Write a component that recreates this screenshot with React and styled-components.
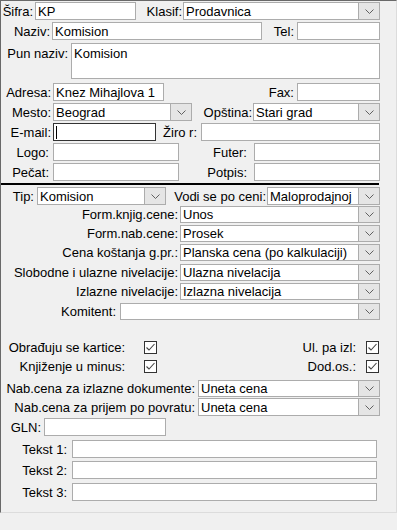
import React from 'react';
import styled, { createGlobalStyle } from 'styled-components';

const GlobalStyle = createGlobalStyle`
  body {
    margin: 0;
    background: #f0f0f0;
    font-family: "Liberation Sans", Arial, sans-serif;
    font-size: 13px;
    color: #000;
  }
`;

const Panel = styled.div`
  width: 397px;
  height: 513px;
  box-sizing: border-box;
  border-top: 1px solid #696969;
  border-left: 1px solid #696969;
  border-right: 1px solid #dcdcdc;
  border-bottom: 1px solid #dcdcdc;
  display: flex;
  flex-direction: column;
`;

const Row = styled.div`
  display: flex;
  align-items: ${(p) => (p.$top ? 'flex-start' : 'center')};
  height: ${(p) => p.$h || 18}px;
  margin-top: ${(p) => p.$mt || 0}px;
  flex: none;
`;

const Label = styled.div`
  width: ${(p) => p.$w}px;
  flex: none;
  box-sizing: border-box;
  text-align: right;
  padding-right: ${(p) => (p.$pr === undefined ? 2 : p.$pr)}px;
  padding-top: ${(p) => p.$pt || 0}px;
  white-space: nowrap;
  line-height: 15px;
`;

const Box = styled.div`
  width: ${(p) => p.$w}px;
  height: 100%;
  flex: none;
  box-sizing: border-box;
  background: #fff;
  border: 1px solid ${(p) => (p.$focus ? '#333' : '#acacac')};
  display: flex;
  align-items: ${(p) => (p.$multi ? 'flex-start' : 'center')};
  padding: ${(p) => (p.$multi ? '2px 0 0 2px' : '0 0 0 2px')};
  white-space: nowrap;
  overflow: hidden;
  line-height: 15px;
`;

const Caret = styled.span`
  width: 1px;
  height: 13px;
  background: #000;
`;

const ComboBox = styled(Box)`
  padding-left: 0;
  align-items: stretch;
`;

const ComboText = styled.div`
  flex: 1;
  display: flex;
  align-items: center;
  padding-left: 2px;
  overflow: hidden;
`;

const ArrowButton = styled.div`
  width: 20px;
  flex: none;
  background: #e5e5e5;
  border-left: 1px solid #acacac;
  display: flex;
  align-items: center;
  justify-content: center;
`;

const CheckBox = styled.div`
  width: 13px;
  height: 13px;
  flex: none;
  box-sizing: border-box;
  border: 1px solid #333;
  background: #fff;
  display: flex;
  align-items: center;
  justify-content: center;
`;

const Separator = styled.div`
  width: 378px;
  height: 2px;
  margin-top: 2px;
  background: #000;
  flex: none;
`;

const TextBox = ({ w, children, focus }) => (
  <Box $w={w} $focus={focus}>
    {focus && <Caret />}
    {children}
  </Box>
);

const Combo = ({ w, children }) => (
  <ComboBox $w={w}>
    <ComboText>{children}</ComboText>
    <ArrowButton>
      <svg width="9" height="5" viewBox="0 0 9 5">
        <polyline points="0.5,0.5 4.5,4.5 8.5,0.5" fill="none" stroke="#606060" strokeWidth="1" />
      </svg>
    </ArrowButton>
  </ComboBox>
);

const Check = () => (
  <CheckBox>
    <svg width="11" height="11" viewBox="0 0 11 11">
      <polyline points="1.5,5.5 4,8 9.5,2" fill="none" stroke="#444" strokeWidth="1.1" />
    </svg>
  </CheckBox>
);

const priceRows = [
  ['Form.knjig.cene:', 'Unos', 1],
  ['Form.nab.cene:', 'Prosek', 2],
  ['Cena koštanja g.pr.:', 'Planska cena (po kalkulaciji)', 2],
  ['Slobodne i ulazne nivelacije:', 'Ulazna nivelacija', 3],
  ['Izlazne nivelacije:', 'Izlazna nivelacija', 2],
];

const App = () => (
  <>
    <GlobalStyle />
    <Panel>
      <Row $mt={1}>
        <Label $w={34}>Šifra:</Label>
        <TextBox w={101}>KP</TextBox>
        <Label $w={47} $pr={1}>Klasif:</Label>
        <Combo w={197}>Prodavnica</Combo>
      </Row>
      <Row $mt={2}>
        <Label $w={51}>Naziv:</Label>
        <TextBox w={210}>Komision</TextBox>
        <Label $w={35} $pr={3}>Tel:</Label>
        <TextBox w={83} />
      </Row>
      <Row $mt={3} $h={36} $top>
        <Label $w={70} $pt={3} $pr={3}>Pun naziv:</Label>
        <Box $w={309} $multi>Komision</Box>
      </Row>
      <Row $mt={4}>
        <Label $w={52}>Adresa:</Label>
        <TextBox w={111}>Knez Mihajlova 1</TextBox>
        <Label $w={133} $pr={3}>Fax:</Label>
        <TextBox w={83} />
      </Row>
      <Row $mt={2}>
        <Label $w={52}>Mesto:</Label>
        <Combo w={139}>Beograd</Combo>
        <Label $w={61} $pr={1}>Opština:</Label>
        <Combo w={127}>Stari grad</Combo>
      </Row>
      <Row $mt={2}>
        <Label $w={52}>E-mail:</Label>
        <TextBox w={103} focus />
        <Label $w={45} $pr={4}>Žiro r:</Label>
        <TextBox w={179} />
      </Row>
      <Row $mt={2}>
        <Label $w={52} $pr={4}>Logo:</Label>
        <TextBox w={126} />
        <Label $w={75} $pr={7}>Futer:</Label>
        <TextBox w={126} />
      </Row>
      <Row $mt={2}>
        <Label $w={52} $pr={4}>Pečat:</Label>
        <TextBox w={126} />
        <Label $w={75} $pr={7}>Potpis:</Label>
        <TextBox w={126} />
      </Row>
      <Separator />
      <Row $mt={2}>
        <Label $w={36} $pr={3}>Tip:</Label>
        <Combo w={129}>Komision</Combo>
        <Label $w={101} $pr={1}>Vodi se po ceni:</Label>
        <Combo w={113}>Maloprodajnoj</Combo>
      </Row>
      {priceRows.map(([label, value, mt]) => (
        <Row key={label} $mt={mt} $h={17}>
          <Label $w={179}>{label}</Label>
          <Combo w={200}>{value}</Combo>
        </Row>
      ))}
      <Row $mt={3} $h={17}>
        <Label $w={119} $pr={4}>Komitent:</Label>
        <Combo w={260} />
      </Row>
      <Row $mt={21} $h={13}>
        <Label $w={143} $pr={19}>Obrađuju se kartice:</Label>
        <Check />
        <Label $w={209} $pr={10}>Ul. pa izl:</Label>
        <Check />
      </Row>
      <Row $mt={6} $h={13}>
        <Label $w={143} $pr={19}>Knjiženje u minus:</Label>
        <Check />
        <Label $w={209} $pr={10}>Dod.os.:</Label>
        <Check />
      </Row>
      <Row $mt={7} $h={17}>
        <Label $w={197} $pr={3}>Nab.cena za izlazne dokumente:</Label>
        <Combo w={182}>Uneta cena</Combo>
      </Row>
      <Row $mt={1}>
        <Label $w={197} $pr={3}>Nab.cena za prijem po povratu:</Label>
        <Combo w={182}>Uneta cena</Combo>
      </Row>
      <Row $mt={2}>
        <Label $w={43} $pr={3}>GLN:</Label>
        <TextBox w={122} />
      </Row>
      {['Tekst 1:', 'Tekst 2:', 'Tekst 3:'].map((t, i) => (
        <Row key={t} $mt={i === 1 ? 3 : 4}>
          <Label $w={71} $pr={5}>{t}</Label>
          <TextBox w={305} />
        </Row>
      ))}
    </Panel>
  </>
);

export default App;
